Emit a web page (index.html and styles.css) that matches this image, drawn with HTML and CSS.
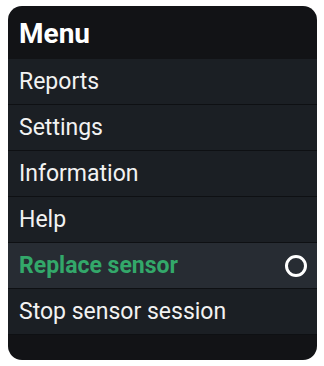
FILE: index.html
```html
<!DOCTYPE html>
<html lang="en">
<head>
    <meta charset="UTF-8">
    <meta name="viewport" content="width=device-width, initial-scale=1.0">
    <title>Menu</title>
    <link rel="stylesheet" href="styles.css">
</head>
<body>

    <div class="menu">
        <div class="menu-title">Menu</div>
        <div class="item">Reports</div>
        <div class="item">Settings</div>
        <div class="item">Information</div>
        <div class="item">Help</div>
        <div class="item selected">
            <span>Replace sensor</span>
            <span class="radio"></span>
        </div>
        <div class="item">Stop sensor session</div>
        <div class="menu-foot"></div>
    </div>

</body>
</html>
```

FILE: styles.css
```css
body {
    margin: 0;
    background-color: #ffffff;
    font-family: Roboto, "Liberation Sans", sans-serif;
}
.menu {
    width: 309px;
    margin: 6px 0 0 8px;
    background: #121316;
    border-radius: 14px;
    overflow: hidden;
    display: flex;
    flex-direction: column;
}
.menu-title {
    height: 53px;
    padding: 2px 11px 0;
    box-sizing: border-box;
    display: flex;
    align-items: center;
    color: #ffffff;
    font-size: 28px;
    font-weight: bold;
}
.item {
    height: 46px;
    box-sizing: border-box;
    padding: 0 10px 0 11px;
    display: flex;
    align-items: center;
    justify-content: space-between;
    background: #1b1f24;
    border-bottom: 1px solid #0e1013;
    color: #f2f2f2;
    font-size: 23px;
}
.item.selected {
    background: #272c33;
    color: #33a86a;
    font-weight: bold;
}
.radio {
    width: 16px;
    height: 16px;
    border: 3px solid #ffffff;
    border-radius: 50%;
}
.menu-foot {
    height: 25px;
}
```
